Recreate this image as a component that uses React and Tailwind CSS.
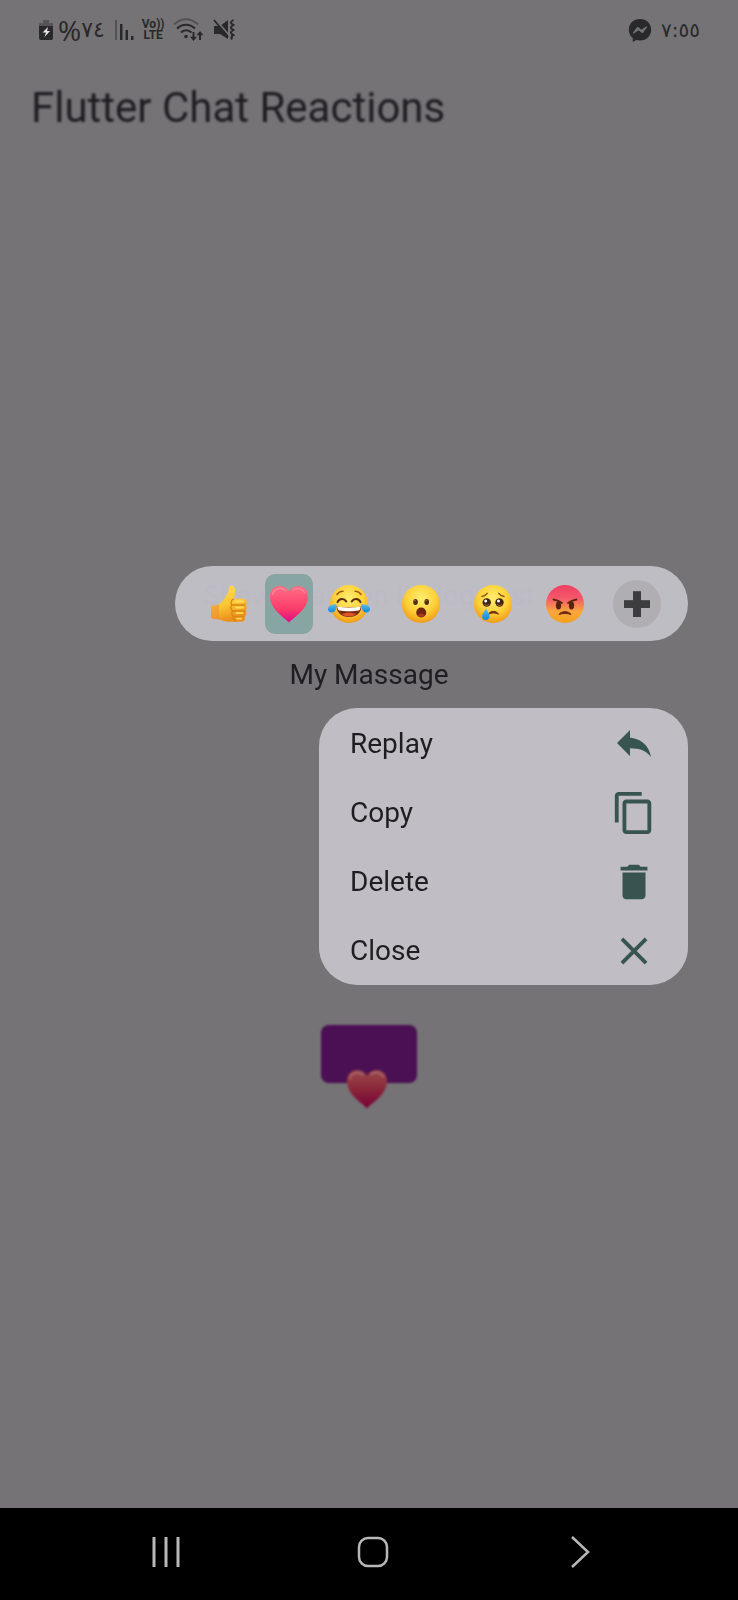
import React from "react";
import { MdDelete, MdClose, MdContentCopy } from "react-icons/md";

function EmojiDefs() {
  return (
    <svg className="absolute h-0 w-0" aria-hidden="true">
      <defs>
        <radialGradient id="face" cx="0.5" cy="0.35" r="0.65">
          <stop offset="0" stopColor="#ffee70" />
          <stop offset="0.6" stopColor="#fdd038" />
          <stop offset="1" stopColor="#f19a17" />
        </radialGradient>
        <linearGradient id="rage" x1="0" y1="0" x2="0" y2="1">
          <stop offset="0" stopColor="#ef3f62" />
          <stop offset="0.35" stopColor="#f4596a" />
          <stop offset="0.7" stopColor="#f9a63c" />
          <stop offset="1" stopColor="#f3a01c" />
        </linearGradient>
        <linearGradient id="heart" x1="0" y1="0" x2="0" y2="1">
          <stop offset="0" stopColor="#ff6f84" />
          <stop offset="0.65" stopColor="#fb3a6a" />
          <stop offset="1" stopColor="#dd0a8c" />
        </linearGradient>
        <linearGradient id="dimHeart" x1="0" y1="0" x2="0" y2="1">
          <stop offset="0" stopColor="#9b4a4c" />
          <stop offset="0.5" stopColor="#8a2638" />
          <stop offset="1" stopColor="#78003a" />
        </linearGradient>
        <linearGradient id="thumb" x1="0" y1="0" x2="0.3" y2="1">
          <stop offset="0" stopColor="#ffdc55" />
          <stop offset="0.6" stopColor="#fbc634" />
          <stop offset="1" stopColor="#ec8f1c" />
        </linearGradient>
        <linearGradient id="tear" x1="0" y1="0" x2="0" y2="1">
          <stop offset="0" stopColor="#5fbdf0" />
          <stop offset="1" stopColor="#0d86dc" />
        </linearGradient>
      </defs>
    </svg>
  );
}

function Thumb() {
  return (
    <svg viewBox="0 0 40 40" className="h-10 w-10">
      <path d="M2 24c0-2 1-2.600 3-2.600 4 0 6.500-1.400 8.500-4.400 2-3 5-6.500 6-9.800.5-2 .7-5.700 3-5.700 3 0 4 3.300 3.500 7.500-.2 2.300-.6 4-1 5.800h8.500c5 0 5 5.200 2.500 6 2.800 1 2.500 5.200 0 6 2.200 1 1.800 4.800-.8 5.600 1.600 1.200.8 5.300-3.200 5.300H21c-4 0-6-.7-9-1.800-2.500-.9-5-1-7-1-2 0-3-.9-3-3z" fill="url(#thumb)" />
      <path d="M2 24c0-2 1-2.600 3-2.600 2 0 4-.5 5-1v14.800c-2-.4-3.500-.3-5-.3-2 0-3-.9-3-3z" fill="#ed9038" opacity="0.6" />
      <path d="M24.500 15.200c-2.500 1-3.200 4-1.500 5.700-1.800 1.800-1.500 4.600.5 5.900-1.300 1.700-1 4.300 1 5.300-.8 2 .2 4.500 2 5.200M23.500 21H36M24 27h12M25 32.400h10" fill="none" stroke="#d98710" strokeWidth="1.300" strokeLinecap="round" />
      <path d="M27 17.500h7M27 23.500h7M27.500 29h6M28 34.700h4" stroke="#ffe46b" strokeWidth="1.800" strokeLinecap="round" opacity="0.8" />
    </svg>
  );
}

function Heart({ fill, className }) {
  return (
    <svg viewBox="0 0 40 38" className={className}>
      <path d="M20 37.500C15 32 1 24.500 1 11.500 1 5 5.500 1 10.500 1c4.500 0 7.500 2 9.500 5.300C22 3 25 1 29.500 1 34.500 1 39 5 39 11.500 39 24.500 25 32 20 37.500z" fill={fill} />
      <path d="M3.500 9.500c1.200-5.500 8-7.800 12.500-4M24 5c4-3 9.500-1.500 11.500 2.500" fill="none" stroke="#fff" strokeWidth="1.500" strokeLinecap="round" opacity="0.22" />
    </svg>
  );
}

function Joy() {
  return (
    <svg viewBox="0 0 44 40" className="h-10 w-11">
      <circle cx="22" cy="20" r="19" fill="url(#face)" />
      <path d="M10 10.500c1.500-2.300 3.800-3.300 6-3.200M34 10.500c-1.500-2.300-3.800-3.300-6-3.200" fill="none" stroke="#a85d10" strokeWidth="1.500" strokeLinecap="round" />
      <path d="M10.500 18.200c1.800-4.200 6.700-4.200 8.800-.7M33.500 18.200c-1.800-4.200-6.700-4.200-8.800-.7" fill="none" stroke="#5a2b0c" strokeWidth="2" strokeLinecap="round" />
      <path d="M9.500 22c5 2 20 2 25 0 0 6.500-5 11-12.500 11S9.500 28.500 9.500 22z" fill="#7c2c10" />
      <path d="M10.300 22.200c5 1.900 18.400 1.900 23.400 0-.1 2.200-.8 3.700-2 4.400-5 .9-14.400.9-19.400 0-1.200-.7-1.900-2.200-2-4.400z" fill="#fff" />
      <path d="M15 30.200c4-2 10-2 14 0-4 3-10 3-14 0z" fill="#e0542c" />
      <path d="M9.500 20c.3 5-1.500 8.500-5 8.500-2.500 0-4-2-3.500-4.200.7-3.200 4.500-3.500 8.500-4.300zM34.500 20c-.3 5 1.500 8.500 5 8.500 2.500 0 4-2 3.500-4.200-.7-3.200-4.500-3.500-8.500-4.300z" fill="url(#tear)" />
    </svg>
  );
}

function Wow() {
  return (
    <svg viewBox="0 0 40 40" className="h-10 w-10">
      <circle cx="20" cy="20" r="19" fill="url(#face)" />
      <ellipse cx="14.500" cy="18" rx="2.300" ry="3" fill="#4a2a12" />
      <ellipse cx="25.700" cy="18" rx="2.300" ry="3" fill="#4a2a12" />
      <circle cx="14" cy="16.800" r="0.800" fill="#9b7b50" />
      <circle cx="25.200" cy="16.800" r="0.800" fill="#9b7b50" />
      <ellipse cx="20.200" cy="28.500" rx="5" ry="5" fill="#71260e" />
      <path d="M17 31.200c1.500-2 5-2 6.400 0-1.600 2-4.800 2-6.400 0z" fill="#b23a1e" />
    </svg>
  );
}

function Sad() {
  return (
    <svg viewBox="0 0 40 40" className="h-10 w-10">
      <circle cx="20" cy="20" r="19" fill="url(#face)" />
      <path d="M9 12.500c2-.3 4-1.300 5.200-3.100M31 12.500c-2-.3-4-1.300-5.200-3.100" fill="none" stroke="#8e5618" strokeWidth="1.500" strokeLinecap="round" />
      <circle cx="13.700" cy="18.500" r="4.200" fill="#402414" />
      <circle cx="26.500" cy="18.500" r="4.200" fill="#402414" />
      <circle cx="12.700" cy="16.900" r="1.500" fill="#fff" />
      <circle cx="25.500" cy="16.900" r="1.500" fill="#fff" />
      <path d="M11.500 20.600c1.300 1 3 1 4.300 0M24.300 20.600c1.300 1 3 1 4.300 0" stroke="#b47641" strokeWidth="1" fill="none" />
      <path d="M15.500 30.200c1.800-3.800 8-3.800 10 0-3.200-1.700-6.800-1.700-10 0z" fill="#76300e" stroke="#76300e" strokeWidth="1" strokeLinejoin="round" />
      <path d="M13 24.500c1.800 3 3.600 5.500 3.600 7.800 0 2.300-1.600 3.700-3.800 3.700S9 34.500 9 32.300c0-2.300 2.400-4.800 4-7.800z" fill="url(#tear)" />
    </svg>
  );
}

function Angry() {
  return (
    <svg viewBox="0 0 40 40" className="h-10 w-10">
      <circle cx="20" cy="20" r="19" fill="url(#rage)" />
      <path d="M8.500 15.500c3 .5 6 1.500 8.500 3.500M31.500 15.500c-3 .5-6 1.500-8.500 3.500" fill="none" stroke="#592410" strokeWidth="1.800" strokeLinecap="round" />
      <ellipse cx="13.500" cy="21.500" rx="2.600" ry="4" fill="#55220f" />
      <ellipse cx="26.500" cy="21.500" rx="2.600" ry="4" fill="#55220f" />
      <path d="M14 30.500c2-3.800 10-3.800 12 0-3.800-1.500-8.200-1.500-12 0z" fill="#6c270e" stroke="#6c270e" strokeWidth="1" strokeLinejoin="round" />
    </svg>
  );
}

function Plus() {
  return (
    <svg viewBox="0 0 28 28" className="h-7 w-7">
      <path d="M10 1h8v9h9v8h-9v9h-8v-9H1v-8h9z" fill="#3d3d40" />
      <path d="M10 1h8v1h-8zM1 10h9v1H1zM18 10h9v1h-9z" fill="#505053" />
    </svg>
  );
}

function Reaction({ label, className = "", children }) {
  return (
    <button type="button" aria-label={label} className={`flex h-12 w-12 shrink-0 items-center justify-center ${className}`}>
      {children}
    </button>
  );
}

function StatusBar() {
  return (
    <div className="flex h-15 items-center justify-between px-[38px] text-[#29282b]">
      <div className="flex items-center">
        <svg viewBox="0 0 16 22" className="h-[22px] w-4">
          <path d="M5 1h6v3h3q1 0 1 1v3H1V5q0-1 1-1h3z" fill="#565458" />
          <path d="M1 7h14v12q0 2-2 2H3q-2 0-2-2z" fill="currentColor" />
          <path d="M10 8 4.500 13.500H8L6.500 18l5.500-6H9z" fill="#e8e6ea" />
        </svg>
        <span className="ml-1 font-['Open_Sans',sans-serif] text-[28px] leading-none">%</span>
        <span className="font-['DejaVu_Sans',sans-serif] text-[22px] leading-none">٧٤</span>
        <svg viewBox="0 0 20 22" className="ml-[9px] h-[22px] w-5" fill="currentColor">
          <path d="M1 1h2v20H1z" opacity="0.45" />
          <path d="M6 5h2.500v16H6zM11.500 11H14v10h-2.500zM17 17h2.500v4H17z" />
        </svg>
        <span className="ml-2 flex flex-col text-center text-xs font-bold leading-[11px]">
          <span>Vo))</span>
          <span>LTE</span>
        </span>
        <svg viewBox="0 0 32 24" className="ml-2 h-6 w-8" fill="none" stroke="currentColor" strokeWidth="2.200">
          <path d="M1 6.500C8-.5 18-.5 25 6.500" opacity="0.45" />
          <path d="M4 10.500c5.500-5 12.500-5 18 0M8 14.500c3-3 7.500-3 10.500 0" />
          <circle cx="13" cy="18.500" r="1.800" fill="currentColor" stroke="none" />
          <path d="M20.500 14v6.500M27 22v-6.500" strokeWidth="2" />
          <path d="M17 18.800h7l-3.500 4.200zM23.500 17.200h7L27 13z" fill="currentColor" stroke="none" />
        </svg>
        <svg viewBox="0 0 22 22" className="ml-2 h-[22px] w-[22px]" fill="none" stroke="currentColor">
          <path d="M1 7h6l8-6v19l-8-5H1z" fill="currentColor" stroke="none" />
          <path d="M3 1l13 15" stroke="#757376" strokeWidth="1.800" />
          <path d="M1 1l14 17" strokeWidth="1.800" />
          <path d="M20.500 1c-3.500 2-3.500 3 0 5-3.500 2-3.500 3 0 5-3.500 2-3.500 3 0 5-2 1-2.500 2.500-1.500 4.500" strokeWidth="2" />
        </svg>
      </div>
      <div className="flex items-center gap-[9px]">
        <svg viewBox="0 0 24 24" className="h-6 w-6">
          <path d="M12 1C5.500 1 .8 5.600.8 11.700c0 3.600 1.500 6.500 4 8.400V24l3.700-2c1.100.3 2.300.4 3.500.4 6.500 0 11.200-4.600 11.200-10.700S18.500 1 12 1z" fill="#29282b" />
          <path d="M5.500 15 9.500 9.500l4 3L18.500 9l-4 5.500-4-3z" fill="#757376" stroke="#757376" strokeWidth="1.200" strokeLinejoin="round" />
        </svg>
        <span className="font-['DejaVu_Sans',sans-serif] text-xl leading-none">٧:٥٥</span>
      </div>
    </div>
  );
}

function ReplyGlyph() {
  return (
    <svg viewBox="0 0 36 30" className="h-[30px] w-9" fill="currentColor">
      <path d="M14 8.500V1L1 14l13 13v-7.800c9.500 0 16 2.300 21 9C33.500 18.500 27.500 10.500 14 8.500z" />
    </svg>
  );
}

const menuItems = [
  { label: "Replay", icon: <ReplyGlyph /> },
  { label: "Copy", icon: <MdContentCopy className="h-[46px] w-[46px]" /> },
  { label: "Delete", icon: <MdDelete className="h-[46px] w-[46px]" /> },
  { label: "Close", icon: <MdClose className="h-[46px] w-[46px]" /> },
];

export default function App() {
  return (
    <div className="flex min-h-screen flex-col bg-[#757376] font-[Roboto,sans-serif] text-[#1f1d21]">
      <EmojiDefs />
      <StatusBar />
      <div className="relative flex grow flex-col">
        <div className="flex flex-col blur-[1px]">
          <h1 className="px-[31px] pt-[21px] text-[42px] leading-[54px]">Flutter Chat Reactions</h1>
          <p className="mt-[445px] text-center text-[28px] leading-8 text-[#45435a]">Show Reaction Dialog Test</p>
          <div className="mt-[413px] flex flex-col items-center">
            <div className="relative h-[58px] w-24 rounded-lg bg-[#4a1053]">
              <Heart fill="url(#dimHeart)" className="absolute left-6 top-11 h-10 w-11" />
            </div>
          </div>
        </div>

        <div className="absolute inset-0 flex flex-col items-end px-[50px] pt-[506px]">
          <div className="flex h-[75px] items-center gap-6 rounded-full bg-[#c8c5cd]/90 pl-[30px] pr-[27px]">
            <div className="flex items-center gap-3">
              <Reaction label="Like"><Thumb /></Reaction>
              <button type="button" aria-label="Love" className="flex h-15 w-12 items-center justify-center rounded-[10px] bg-[#86a5a3]">
                <Heart fill="url(#heart)" className="h-[38px] w-10" />
              </button>
              <Reaction label="Laugh"><Joy /></Reaction>
            </div>
            <Reaction label="Surprised"><Wow /></Reaction>
            <Reaction label="Sad"><Sad /></Reaction>
            <Reaction label="Angry"><Angry /></Reaction>
            <Reaction label="More" className="rounded-full bg-[#b0aeb3]"><Plus /></Reaction>
          </div>
          <p className="h-[67px] w-full text-center text-[28px] leading-[67px]">My Massage</p>
          <div className="flex w-[369px] flex-col rounded-[38px] bg-[#c0bdc4] pt-px">
            {menuItems.map(({ label, icon }) => (
              <button key={label} type="button" className="flex h-[69px] items-center justify-between px-[31px] text-left text-[28px]">
                <span>{label}</span>
                <span className="flex w-[46px] justify-center text-[#385450]">{icon}</span>
              </button>
            ))}
          </div>
        </div>
      </div>
      <nav className="flex h-23 items-center justify-around bg-black pb-1 pl-[63px] pr-[55px] text-[#b8b8b8]">
        <button type="button" aria-label="Recent apps">
          <svg viewBox="0 0 32 32" className="h-8 w-8" fill="none" stroke="currentColor" strokeWidth="3"><path d="M4 1v30M16 1v30M28 1v30" /></svg>
        </button>
        <button type="button" aria-label="Home">
          <svg viewBox="0 0 32 32" className="h-8 w-8" fill="none" stroke="currentColor" strokeWidth="2.500"><rect x="2" y="2" width="28" height="28" rx="9" /></svg>
        </button>
        <button type="button" aria-label="Back">
          <svg viewBox="0 0 32 32" className="h-8 w-8" fill="none" stroke="currentColor" strokeWidth="2.500"><path d="M8 1l16 15L8 31" /></svg>
        </button>
      </nav>
    </div>
  );
}
